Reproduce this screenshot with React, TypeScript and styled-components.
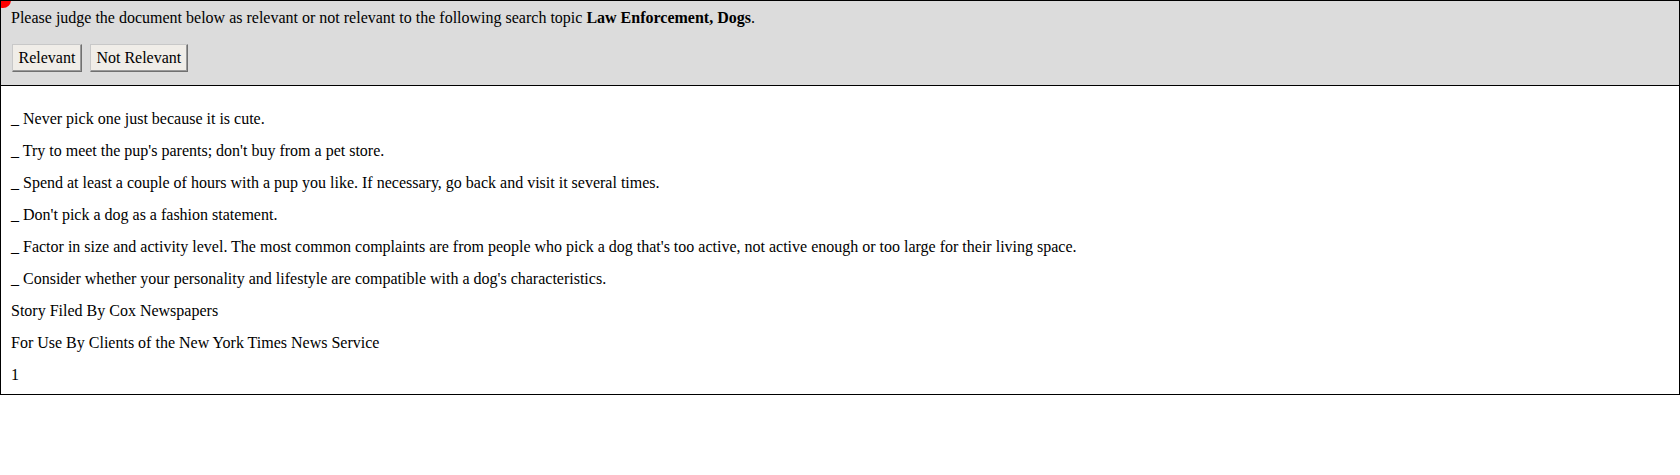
import React from "react";
import styled, { createGlobalStyle } from "styled-components";

const GlobalStyle = createGlobalStyle`
  html, body { margin: 0; padding: 0; background: #ffffff; }
  body { font-family: "Liberation Serif", "Times New Roman", serif; font-size: 16px; color: #000; }
`;

const Frame = styled.div`
  position: relative;
  border: 1px solid #000;
  width: 1678px;
  overflow: hidden;
`;

const Dot = styled.span`
  position: absolute;
  left: -6px;
  top: -9px;
  width: 16px;
  height: 16px;
  border-radius: 50%;
  background: #ff0000;
`;

const Header = styled.div`
  background: #dcdcdc;
  border-bottom: 1px solid #000;
  padding: 8px 10px 13px 10px;
  display: flex;
  flex-direction: column;
  gap: 17px;
`;

const Prompt = styled.div`
  line-height: 18px;
`;

const Buttons = styled.div`
  display: flex;
  gap: 8px;
  padding-left: 1px;
`;

const Button = styled.button`
  font-family: "Liberation Serif", "Times New Roman", serif;
  font-size: 16px;
  color: #000;
  background: #f0ede8;
  height: 28px;
  padding: 0 5.5px;
  border: 1px solid;
  border-color: #c8c8c8 #707070 #707070 #c8c8c8;
  box-shadow: inset -1px -1px 0 #9a9a9a;
  cursor: pointer;
`;

const Doc = styled.div`
  display: flex;
  flex-direction: column;
  gap: 14px;
  padding: 24px 10px 10px 10px;
`;

const Para = styled.p`
  margin: 0;
  line-height: 18px;
`;

const lines = [
  "_ Never pick one just because it is cute.",
  "_ Try to meet the pup's parents; don't buy from a pet store.",
  "_ Spend at least a couple of hours with a pup you like. If necessary, go back and visit it several times.",
  "_ Don't pick a dog as a fashion statement.",
  "_ Factor in size and activity level. The most common complaints are from people who pick a dog that's too active, not active enough or too large for their living space.",
  "_ Consider whether your personality and lifestyle are compatible with a dog's characteristics.",
  "Story Filed By Cox Newspapers",
  "For Use By Clients of the New York Times News Service",
  "1",
];

export default function App() {
  return (
    <>
      <GlobalStyle />
      <Frame>
        <Dot />
        <Header>
          <Prompt>
            Please judge the document below as relevant or not relevant to the following search topic <b>Law Enforcement, Dogs</b>.
          </Prompt>
          <Buttons>
            <Button>Relevant</Button>
            <Button>Not Relevant</Button>
          </Buttons>
        </Header>
        <Doc>
          {lines.map((l, i) => (
            <Para key={i}>{l}</Para>
          ))}
        </Doc>
      </Frame>
    </>
  );
}
